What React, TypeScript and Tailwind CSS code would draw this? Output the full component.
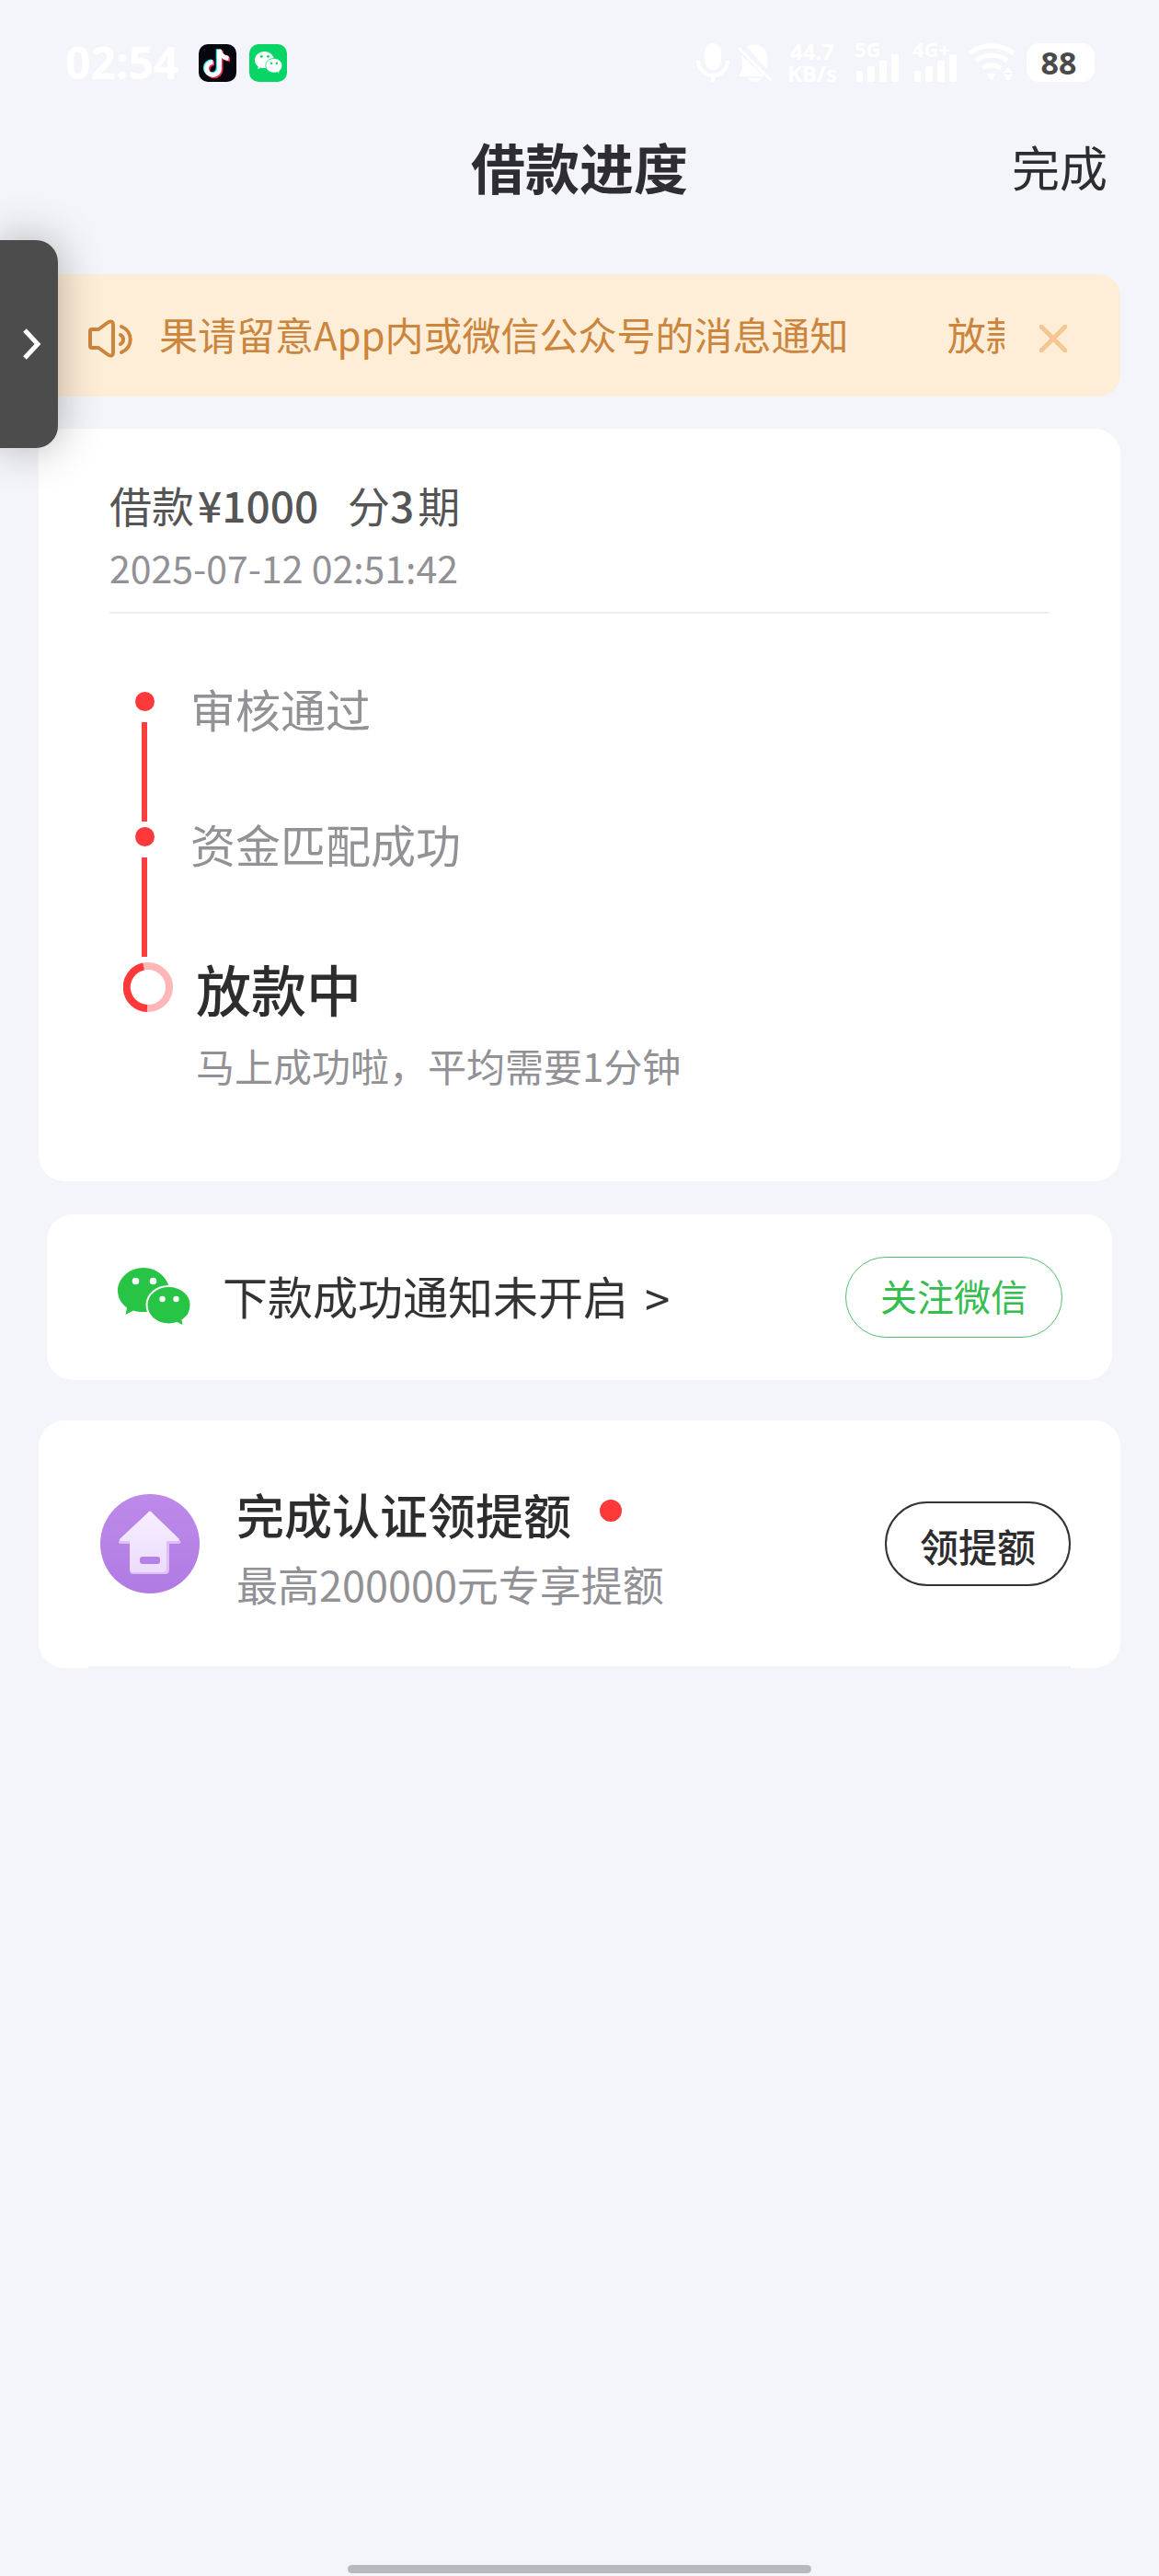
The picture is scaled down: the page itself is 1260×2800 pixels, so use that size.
interface Step {
  title: string;
  note?: string;
}

const doneSteps: Step[] = [{ title: '审核通过' }, { title: '资金匹配成功' }];
const currentStep: Step = { title: '放款中', note: '马上成功啦，平均需要1分钟' };

function WechatIcon({ className, fill, gap }: { className: string; fill: string; gap: string }) {
  return (
    <svg viewBox="0 0 80 64" className={className} aria-hidden="true">
      <path
        d="M28 0C12.500 0 0 11.500 0 25c0 7.500 4 14 10 18.500L8.500 51l8.500-4.500c3.500 1 7 1.500 11 1.500 15.500 0 28-10 28-23S43.500 0 28 0z"
        fill={fill}
      />
      <path
        d="M55.500 20C42 20 31.500 29 31.500 40.500S42 61.500 55.500 61.500c3 0 6-.500 9-1.500l7.500 4-1.500-7c5.500-3.500 9-9.500 9-16.500C79.500 29 69 20 55.500 20z"
        fill={fill}
        stroke={gap}
        strokeWidth="2"
      />
      <circle cx="19.500" cy="14.500" r="3.800" fill={gap} />
      <circle cx="38.500" cy="14.500" r="3.800" fill={gap} />
      <circle cx="48.500" cy="34" r="3.200" fill={gap} />
      <circle cx="63.500" cy="34" r="3.200" fill={gap} />
    </svg>
  );
}

function TiktokIcon() {
  const note = 'M22.500 6v20.500a7 7 0 1 1-7-7M22.500 6c.500 5 4.500 9 10 9.500';
  return (
    <svg viewBox="0 0 41 41" className="size-[41px]" aria-hidden="true">
      <rect width="41" height="41" rx="10" fill="#06060f" />
      <g fill="none" strokeWidth="5">
        <path d={note} stroke="#25f0ea" transform="translate(-1.200 -.800)" />
        <path d={note} stroke="#fb2a55" transform="translate(1.500 1.200)" />
        <path d={note} stroke="#fff" />
      </g>
    </svg>
  );
}

function SignalBars({ label }: { label: string }) {
  return (
    <div className="flex w-12 flex-col">
      <span className="h-3 text-[22px] leading-3 font-bold whitespace-nowrap">{label}</span>
      <svg viewBox="0 0 48 30" className="h-[30px] w-12" fill="currentColor" aria-hidden="true">
        <rect x="2" y="18" width="7" height="12" rx="2" />
        <rect x="14" y="13" width="8" height="17" rx="2" />
        <rect x="27" y="7" width="8" height="23" rx="2" />
        <rect x="40" y="0" width="8" height="30" rx="2" />
      </svg>
    </div>
  );
}

function StatusBar() {
  return (
    <div className="flex h-[136px] items-center justify-between pr-[70px] pl-[71px] font-['Noto_Sans',sans-serif] text-white">
      <div className="flex items-center">
        <span className="text-[48px] leading-[56px] font-bold">02:54</span>
        <div className="ml-[22px] flex items-center gap-[14px]">
          <TiktokIcon />
          <div className="flex size-[41px] items-center justify-center rounded-[10px] bg-[#07d667]">
            <WechatIcon className="h-[24px] w-[30px]" fill="#fff" gap="#07d667" />
          </div>
        </div>
      </div>
      <div className="flex items-center">
        <svg viewBox="0 0 36 42" className="h-[42px] w-9" aria-hidden="true">
          <rect x="9" y="0" width="18" height="29" rx="9" fill="#fff" />
          <path d="M2 19c0 9 7 16 16 16s16-7 16-16M18 35v7" fill="none" stroke="#fff" strokeWidth="4" />
        </svg>
        <svg viewBox="0 0 40 42" className="ml-2 h-[42px] w-10" fill="#fff" aria-hidden="true">
          <path d="M11 4a14 14 0 0 1 22 11v14zM5 13l25 23H2l4-8zM13 38h14c-3 5-11 5-14 0z" />
          <path d="M2 5l35 35" stroke="#fff" strokeWidth="3" />
        </svg>
        <div className="ml-4 flex w-[52px] flex-col items-center text-[24px] leading-6 font-bold">
          <span>44.7</span>
          <span>KB/s</span>
        </div>
        <div className="ml-5 flex gap-[15px]">
          <SignalBars label="5G" />
          <SignalBars label="4G+" />
        </div>
        <svg viewBox="0 0 52 42" className="ml-3 h-[42px] w-[52px]" aria-hidden="true">
          <path d="M2 11c14-11 34-11 48 0M9 19c10-8 24-8 34 0M16 27c6-4 14-4 20 0" fill="none" stroke="#fff" strokeWidth="5" />
          <path d="M20 33h11l-5 8zM39 34h10l-5 7zM39 32h10l-5-6z" fill="#fff" />
        </svg>
        <div className="ml-3 flex h-[42px] w-[74px] items-center justify-center rounded-[14px] bg-white pr-1">
          <span className="text-[34px] leading-[42px] font-bold text-[#4a4a4a]">88</span>
        </div>
      </div>
    </div>
  );
}

function Notice() {
  return (
    <div className="mx-[42px] flex h-[133px] items-center rounded-3xl bg-[#ffeed7] pr-[58px] pl-[54px] text-[#cb853d]">
      <svg viewBox="0 0 48 44" className="mt-1.5 h-11 w-12 shrink-0" fill="none" stroke="currentColor" strokeWidth="4" strokeLinejoin="round" strokeLinecap="round" aria-hidden="true">
        <path d="M2 14q0-2 2-2h7l11-8q5-2 5 3v30q0 5-5 3l-11-8H4q-2 0-2-2z" />
        <path d="M36 9c13 5 13 23 0 28M35 18c4 2 4 8 0 10" />
      </svg>
      <div className="mb-1 ml-[29px] flex flex-1 gap-[107px] overflow-hidden text-[42px] leading-[60px] whitespace-nowrap">
        <span>果请留意App内或微信公众号的消息通知</span>
        <span>放款</span>
      </div>
      <button type="button" aria-label="关闭" className="mt-1.5 ml-[38px] shrink-0 text-[#f6c594]">
        <svg viewBox="0 0 30 30" className="size-[30px]" stroke="currentColor" strokeWidth="5" strokeLinecap="round" aria-hidden="true">
          <path d="M2 2l26 26M28 2L2 28" />
        </svg>
      </button>
    </div>
  );
}

function ProgressCard() {
  return (
    <section className="mx-[42px] mt-[35px] rounded-[28px] bg-white px-[77px] pt-[50px] pb-[94px]">
      <div className="border-b-2 border-[#eeeeef] pb-[13px]">
        <h2 className="flex text-[46px] leading-[64px] text-[#555556]">
          <span>借款</span>
          <b className="ml-1 font-medium">¥1000</b>
          <span className="ml-8">分</span>
          <b className="font-medium">3</b>
          <span className="ml-1">期</span>
        </h2>
        <p className="text-[41px] leading-[72px] text-[#919196]">2025-07-12 02:51:42</p>
      </div>
      <ol className="mt-[85px]">
        {doneSteps.map((step) => (
          <li key={step.title} className="flex h-[147px] text-[49px] leading-[60px] text-[#919196]">
            <div className="flex w-[76px] flex-col items-center gap-3 pb-1.5">
              <i className="size-[21px] shrink-0 rounded-full bg-[#fd3a39]" />
              <i className="w-[6px] flex-1 bg-[#f9403f]" />
            </div>
            <span className="-mt-3 ml-3">{step.title}</span>
          </li>
        ))}
        <li className="flex">
          <svg viewBox="0 0 54 54" className="ml-[15px] size-[54px]" fill="none" strokeWidth="8" aria-hidden="true">
            <circle cx="27" cy="27" r="23" stroke="#ffb6b6" />
            <path d="M26 50A23 23 0 0 1 22 4.500" stroke="#fd3a39" />
          </svg>
          <div className="-mt-1 ml-[25px]">
            <h3 className="text-[60px] leading-[64px] font-medium text-[#2d2d2f]">{currentStep.title}</h3>
            <p className="mt-5 text-[42px] leading-[64px] text-[#919196]">{currentStep.note}</p>
          </div>
        </li>
      </ol>
    </section>
  );
}

function WechatCard() {
  return (
    <section className="mx-[51px] mt-[36px] flex h-[180px] items-center justify-between rounded-[28px] bg-white pr-[54px] pl-[77px]">
      <a href="#wechat" className="flex items-center text-[49px] leading-[72px] text-[#333335]">
        <WechatIcon className="h-16 w-20" fill="#28c445" gap="#fff" />
        <span className="mb-1 ml-[34px]">下款成功通知未开启</span>
        <span className="ml-[18px]">&gt;</span>
      </a>
      <button type="button" className="h-[88px] w-[236px] rounded-full border border-[#4fbf6a] pb-1 text-[40px] leading-[56px] text-[#36bd50]">
        关注微信
      </button>
    </section>
  );
}

function QuotaCard() {
  return (
    <section className="mx-[42px] mt-11 rounded-[28px] bg-white px-[54px]">
      <div className="flex h-[269px] items-center justify-between border-b-2 border-[#f2f3f6] pl-[13px]">
        <div className="flex items-center">
          <svg viewBox="0 0 108 108" className="size-[108px]" aria-hidden="true">
            <defs>
              <linearGradient id="disc" x1="0" y1="0" x2="0" y2="1">
                <stop offset="0" stopColor="#bd8aea" />
                <stop offset="1" stopColor="#b07be3" />
              </linearGradient>
              <linearGradient id="house" x1="0" y1="0" x2="0" y2="1">
                <stop offset="0" stopColor="#f7eeff" />
                <stop offset="1" stopColor="#ecdcfb" />
              </linearGradient>
            </defs>
            <circle cx="54" cy="54" r="54" fill="url(#disc)" />
            <path d="M51 22q3-5 6 0l29 28q4 4-2 4H75v28q0 5-4 5H36q-4 0-4-5V54H23q-5 0-2-4z" fill="#dcc0f7" />
            <path d="M51 21q3-5 6 0l28 27q3 3-2 3H72v30q0 4-4 4H36q-4 0-4-4V51H24q-5 0-2-3z" fill="url(#house)" />
            <rect x="43" y="68" width="22" height="8" rx="3" fill="#b681e6" />
          </svg>
          <div className="mt-3 ml-10">
            <div className="flex items-start">
              <h3 className="text-[52px] leading-[76px] font-medium text-[#2d2d2f]">完成认证领提额</h3>
              <i className="mt-[22px] ml-[31px] size-6 rounded-full bg-[#fd3a39]" />
            </div>
            <p className="text-[45px] leading-[76px] text-[#919196]">最高200000元专享提额</p>
          </div>
        </div>
        <button type="button" className="h-[92px] w-[202px] rounded-full border-2 border-[#333335] pt-1 text-[42px] leading-[60px] font-medium text-[#2d2d2f]">
          领提额
        </button>
      </div>
    </section>
  );
}

export default function App() {
  return (
    <div className="relative flex min-h-screen flex-col overflow-hidden bg-[#f4f5fa] font-['Noto_Sans_CJK_SC',sans-serif]">
      <StatusBar />
      <header className="mb-[72px] grid h-[90px] grid-cols-3 items-center px-14">
        <h1 className="col-start-2 text-center text-[59px] leading-[84px] font-bold text-[#2d2d33]">借款进度</h1>
        <button type="button" className="justify-self-end text-[52px] leading-[76px] text-[#2d2d2f]">
          完成
        </button>
      </header>
      <main className="flex-1">
        <Notice />
        <ProgressCard />
        <WechatCard />
        <QuotaCard />
      </main>
      <div className="mx-auto mb-[3px] h-[9px] w-2/5 rounded-full bg-[#b8b9be]" />

      {/* drawer handle floating over the left edge */}
      <button
        type="button"
        aria-label="展开"
        className="absolute top-[261px] left-0 flex h-[226px] w-[63px] items-center justify-end rounded-r-3xl bg-[#4c4c4c] pr-[18px] text-white shadow-[0_0_48px_rgba(0,0,0,0.3)]"
      >
        <svg viewBox="0 0 20 34" className="h-[34px] w-5" fill="none" stroke="currentColor" strokeWidth="5" aria-hidden="true">
          <path d="M2 2l14 15L2 32" />
        </svg>
      </button>
    </div>
  );
}
